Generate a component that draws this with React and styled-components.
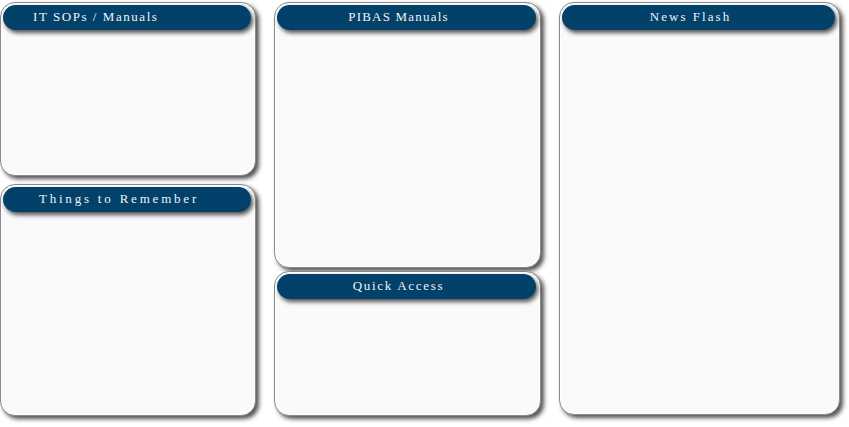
import React from "react";
import styled, { createGlobalStyle } from "styled-components";

const GlobalStyle = createGlobalStyle`
  html, body {
    margin: 0;
    padding: 0;
    background: #ffffff;
  }
`;

const panels = {
    left: [
        { title: "IT SOPs / Manuals", height: 174, align: "left", spacing: 1.55 },
        { title: "Things to Remember", height: 232, spacing: 2.8 },
    ],
    middle: [
        { title: "PIBAS Manuals", height: 266, spacing: 1.2 },
        { title: "Quick Access", height: 145, spacing: 1.7 },
    ],
    right: [{ title: "News Flash", height: 413, spacing: 2.05 }],
};

const Panel = ({ title, height, align, spacing }) => (
    <Box $height={height}>
        <Header $align={align} $spacing={spacing}>
            {title}
        </Header>
        <Body />
    </Box>
);

const App = () => {
    return (
        <>
            <GlobalStyle />
            <Page>
                <Column $width={256} $gap={8}>
                    {panels.left.map((p) => (
                        <Panel key={p.title} {...p} />
                    ))}
                </Column>
                <Column $width={267} $gap={3}>
                    {panels.middle.map((p) => (
                        <Panel key={p.title} {...p} />
                    ))}
                </Column>
                <Column $width={281} $gap={0}>
                    {panels.right.map((p) => (
                        <Panel key={p.title} {...p} />
                    ))}
                </Column>
            </Page>
        </>
    );
};

export default App;

// region STYLES

const Page = styled.div`
    display: flex;
    align-items: flex-start;
    gap: 18px;
    padding: 2px 0 0 0;
    width: 849px;
    height: 427px;
    box-sizing: border-box;
`;

const Column = styled.div`
    display: flex;
    flex-direction: column;
    gap: ${(p) => p.$gap}px;
    width: ${(p) => p.$width}px;
    flex-shrink: 0;
`;

const Box = styled.div`
    display: flex;
    flex-direction: column;
    height: ${(p) => p.$height}px;
    box-sizing: border-box;
    background: #fafafa;
    border: 1px solid #8a8a8a;
    border-radius: 15px;
    box-shadow: inset 0 0 0 1px #ffffff, 3px 3px 4px rgba(40, 40, 40, 0.8);
    padding: 2px 4px 0 2px;
`;

const Header = styled.div`
    height: 25px;
    line-height: 23px;
    flex-shrink: 0;
    background: #02426a;
    border-radius: 13px;
    box-shadow: 2px 3px 4px rgba(30, 30, 30, 0.75);
    color: #f2f2f2;
    font-family: "Liberation Serif", "DejaVu Serif", serif;
    font-size: 13px;
    letter-spacing: ${(p) => p.$spacing}px;
    white-space: nowrap;
    text-align: ${(p) => (p.$align === "left" ? "left" : "center")};
    padding: ${(p) => (p.$align === "left" ? "0 0 0 30px" : "0 16px 0 0")};
`;

const Body = styled.div`
    flex: 1;
`;

// endregion
